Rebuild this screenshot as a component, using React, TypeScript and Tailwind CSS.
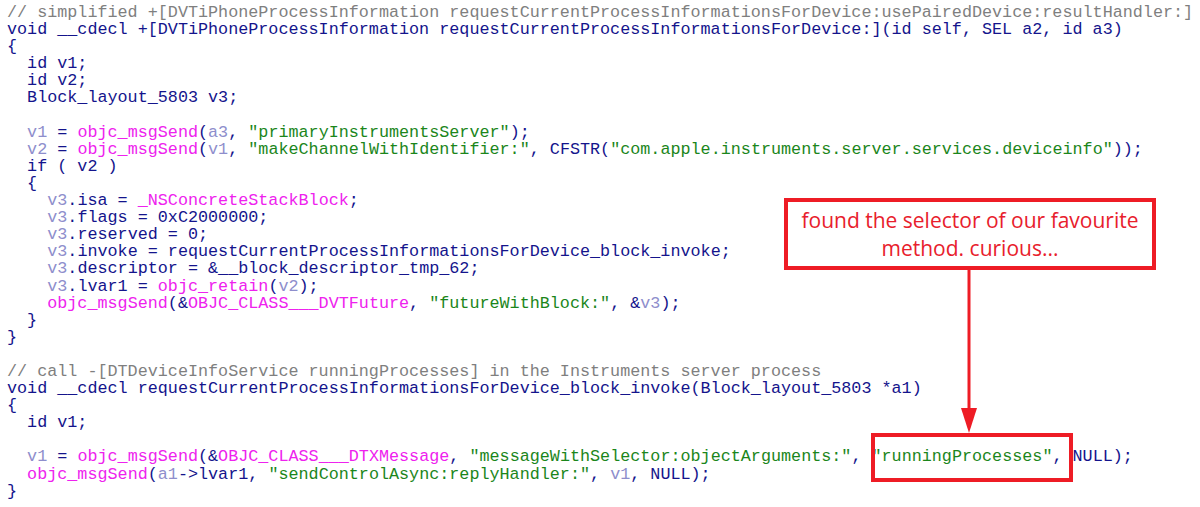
import React from "react";

type Tok = [keyof typeof tone, string];

const tone = {
  c: "text-[#7f7f7f]",
  n: "text-[#14148c]",
  f: "text-[#ee22ee]",
  s: "text-[#1b861b]",
  v: "text-[#8e8ecc]",
};

const lines: Tok[][] = [
  [["c", "// simplified +[DVTiPhoneProcessInformation requestCurrentProcessInformationsForDevice:usePairedDevice:resultHandler:]"]],
  [["n", "void __cdecl +[DVTiPhoneProcessInformation requestCurrentProcessInformationsForDevice:](id self, SEL a2, id a3)"]],
  [["n", "{"]],
  [["n", "  id v1;"]],
  [["n", "  id v2;"]],
  [["n", "  Block_layout_5803 v3;"]],
  [],
  [["n", "  "], ["v", "v1"], ["n", " = "], ["f", "objc_msgSend"], ["n", "("], ["v", "a3"], ["n", ", "], ["s", "\"primaryInstrumentsServer\""], ["n", ");"]],
  [["n", "  "], ["v", "v2"], ["n", " = "], ["f", "objc_msgSend"], ["n", "("], ["v", "v1"], ["n", ", "], ["s", "\"makeChannelWithIdentifier:\""], ["n", ", CFSTR("], ["s", "\"com.apple.instruments.server.services.deviceinfo\""], ["n", "));"]],
  [["n", "  if ( v2 )"]],
  [["n", "  {"]],
  [["n", "    "], ["v", "v3"], ["n", ".isa = "], ["f", "_NSConcreteStackBlock"], ["n", ";"]],
  [["n", "    "], ["v", "v3"], ["n", ".flags = 0xC2000000;"]],
  [["n", "    "], ["v", "v3"], ["n", ".reserved = 0;"]],
  [["n", "    "], ["v", "v3"], ["n", ".invoke = requestCurrentProcessInformationsForDevice_block_invoke;"]],
  [["n", "    "], ["v", "v3"], ["n", ".descriptor = &__block_descriptor_tmp_62;"]],
  [["n", "    "], ["v", "v3"], ["n", ".lvar1 = "], ["f", "objc_retain"], ["n", "("], ["v", "v2"], ["n", ");"]],
  [["n", "    "], ["f", "objc_msgSend"], ["n", "(&"], ["f", "OBJC_CLASS___DVTFuture"], ["n", ", "], ["s", "\"futureWithBlock:\""], ["n", ", &"], ["v", "v3"], ["n", ");"]],
  [["n", "  }"]],
  [["n", "}"]],
  [],
  [["c", "// call -[DTDeviceInfoService runningProcesses] in the Instruments server process"]],
  [["n", "void __cdecl requestCurrentProcessInformationsForDevice_block_invoke(Block_layout_5803 *a1)"]],
  [["n", "{"]],
  [["n", "  id v1;"]],
  [],
  [["n", "  "], ["v", "v1"], ["n", " = "], ["f", "objc_msgSend"], ["n", "(&"], ["f", "OBJC_CLASS___DTXMessage"], ["n", ", "], ["s", "\"messageWithSelector:objectArguments:\""], ["n", ", "], ["s", "\"runningProcesses\""], ["n", ", NULL);"]],
  [["n", "  "], ["f", "objc_msgSend"], ["n", "("], ["v", "a1"], ["n", "->lvar1, "], ["s", "\"sendControlAsync:replyHandler:\""], ["n", ", "], ["v", "v1"], ["n", ", NULL);"]],
  [["n", "}"]],
];

export default function App() {
  return (
    <div className="relative w-[1200px] h-[507px] overflow-hidden bg-white">
      <div className="pl-[7px] pt-[4px] font-['Liberation_Mono',monospace] text-[16.75px] leading-[17.1px] whitespace-pre">
        {lines.map((line, i) => (
          <div key={i} className="h-[17.1px]">
            {line.map(([k, t], j) => (
              <span key={j} className={tone[k]}>
                {t}
              </span>
            ))}
          </div>
        ))}
      </div>

      {/* annotation */}
      <div className="absolute left-[784px] top-[198px] w-[372px] h-[72px] border-4 border-[#ee1c25] bg-white flex flex-col items-center justify-center font-['Open_Sans',sans-serif] text-[21px] leading-[28px] text-[#e8202c]">
        <div>found the selector of our favourite</div>
        <div>method. curious...</div>
      </div>

      {/* arrow */}
      <svg className="absolute left-[958px] top-[270px]" width="22" height="164" viewBox="0 0 22 164">
        <line x1="11" y1="0" x2="11" y2="142" stroke="#ee1c25" strokeWidth="3" />
        <polygon points="3,138 19,138 11,163" fill="#ee1c25" />
      </svg>

      {/* highlight */}
      <div className="absolute left-[871px] top-[433px] w-[202px] h-[49px] border-4 border-[#ee1c25]" />
    </div>
  );
}
